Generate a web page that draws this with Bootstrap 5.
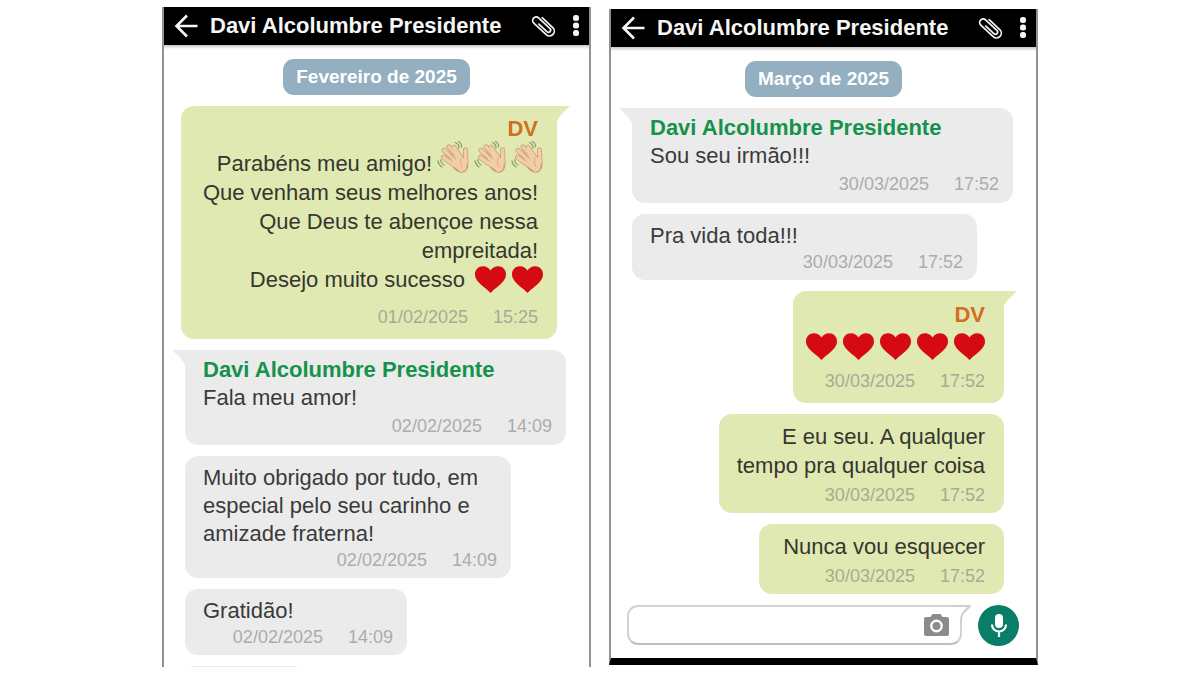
<!DOCTYPE html>
<html lang="pt-BR">
<head>
<meta charset="utf-8">
<meta name="viewport" content="width=device-width, initial-scale=1">
<title>Davi Alcolumbre Presidente</title>
<link href="https://cdn.jsdelivr.net/npm/bootstrap@5.3.0/dist/css/bootstrap.min.css" rel="stylesheet">
<style>
  body { font-family: "Liberation Sans", Arial, sans-serif; font-size: 22px; line-height: 29px; color: #35362f; background: #fff; }
  .board { max-width: 876px; height: 100vh; padding: 7px 0 8px; gap: 18px; }
  .phone { flex: 1 1 0; min-width: 0; min-height: 0; border: solid #929292; border-width: 0 2px; overflow: hidden; }
  .phone-closed { margin: 2px 0; border-bottom: 7px solid #000; }
  .topbar { height: 38px; margin: 0 -2px; padding: 0 8px 0 12px; background: #000; color: #f6f6f6; box-shadow: 0 2px 3px #c4c4c4; flex: none; }
  .topbar h1 { font-size: 22px; font-weight: 700; line-height: 38px; }
  .icon-btn { border: 0; padding: 0; background: none; color: inherit; display: flex; }
  .chat { padding: 14px 32px 0 16px; gap: 11px; min-height: 0; }
  .chat > * { flex: none; }
  .pill { margin-left: 16px; padding: 0 13px; border-radius: 11px; background: #93afc0; color: #fff; font-size: 19px; font-weight: 700; line-height: 36px; }
  .bubble { position: relative; border-radius: 13px; }
  .bubble p, .bubble h2 { margin: 0; }
  .received { align-self: flex-start; margin-left: 5px; background: #ebebeb; padding: 8px 14px 8px 18px; line-height: 28px; color: #3a3a3a; }
  .sent { align-self: flex-end; background: #e0e9b1; padding: 8px 19px 8px 18px; text-align: right; }
  .tail::before { content: ""; position: absolute; top: 0; width: 14px; height: 16px; }
  .received.tail { border-top-left-radius: 0; padding-top: 6px; padding-bottom: 9px; }
  .received.tail::before { right: 100%; margin-right: -1px; background: #ebebeb; clip-path: polygon(0 0, 100% 0, 100% 100%, 60% 50%); }
  .sent.tail { border-top-right-radius: 0; padding: 9px 19px 12px 13px; }
  .sent.tail::before { left: 100%; margin-left: -1px; background: #e0e9b1; clip-path: polygon(0 0, 100% 0, 35% 55%, 0 100%); }
  .author { font-size: 22px; font-weight: 700; line-height: inherit; color: #15924b; }
  .sent .author { color: #d0701f; }
  .meta { display: flex; justify-content: flex-end; gap: 25px; margin-top: 2px; font-size: 18px; line-height: 20px; color: #acacac; }
  .received.tail .meta { margin-top: 4px; }
  .sent .meta { margin-top: 5px; color: #a7ab95; }
  .sent.tail .meta { margin-top: 7px; }
  .sent.long { padding-top: 8px; padding-left: 22px; }
  .sent.long .meta { margin-top: 13px; }
  .sent.brief { padding-left: 24px; }
  .emoji-line { height: 35px; display: flex; align-items: flex-end; justify-content: flex-end; }
  .overhang { display: flex; margin: 0 -8px 3px 5px; gap: 2px; }
  .hand { width: 35px; height: 35px; }
  .heart { width: 31px; height: 27px; fill: #d50a12; }
  .hearts { display: flex; gap: 6px; align-items: center; }
  .hearts-end { margin: 0 -5px 0 10px; }
  .w-name { width: 381px; } .w-thanks { width: 326px; } .w-short { width: 222px; } .w-mid { width: 345px; } .w-stub { width: 118px; }
  .composer { padding: 11px 17px 0 16px; gap: 16px; }
  .field { position: relative; height: 40px; }
  .field input { width: 100%; height: 40px; padding: 4px 48px 4px 12px; border: 2px solid #d2d2d2; border-bottom-color: #bfbfbf; border-radius: 11px; border-top-right-radius: 0; font-size: 20px; background: #fff; outline: 0; }
  .field .notch { position: absolute; top: 0; right: -9px; }
  .field .icon-btn { position: absolute; right: 13px; top: 9px; color: #8b8b8b; }
  .mic { width: 41px; height: 41px; border: 0; padding: 0; border-radius: 50%; background: #087d67; flex: none; }
</style>
</head>
<body>
<svg class="d-none" aria-hidden="true">
  <symbol id="back" viewBox="0 0 24 24"><path d="M13 1.500 2.500 12 13 22.500M2.500 12H23.500" fill="none" stroke="currentColor" stroke-width="2.600"/></symbol>
  <symbol id="clip" viewBox="0 0 26 26"><path transform="translate(13 13) rotate(-47)" d="M4.800-7V7.500A4.800 4.800 0 0 1-4.800 7.500V-9.500A3.500 3.500 0 0 1 2.200-9.500V6A2.200 2.200 0 0 1-2.200 6V-5" fill="none" stroke="currentColor" stroke-width="1.700" stroke-linecap="round"/></symbol>
  <symbol id="dots" viewBox="0 0 6 22"><g fill="currentColor"><rect width="6" height="6" rx="2.500"/><rect y="7.500" width="6" height="6" rx="2.500"/><rect y="15" width="6" height="6" rx="2.500"/></g></symbol>
  <symbol id="heart" viewBox="0 0 31 27"><path d="M15.500 27C12 23 6 19.500 2.500 15 .5 12.300 0 10.500 0 8.300 0 3.800 3.500.3 8 .3c3.200 0 6 1.700 7.500 4.300C17 2 19.800.3 23 .3c4.500 0 8 3.500 8 8 0 2.200-.5 4-2.500 6.700C25 19.500 19 23 15.500 27Z"/></symbol>
  <symbol id="hand" viewBox="0 0 35 35">
    <g fill="none" stroke-linecap="round" stroke-linejoin="round">
      <g stroke="#c99a74" stroke-width="5"><path d="M17 25 6.500 17.500M19 22 7 10.500M22 20 12 7M25 19 17 7.500M29 23 28.500 10"/></g>
      <path d="M16 22Q20 16 29 19Q32 28 27 31Q21 33 16 25Z" fill="#f1cda8" stroke="#c99a74" stroke-width="2.500"/>
      <g stroke="#f1cda8" stroke-width="3.600"><path d="M17 25 6.500 17.500M19 22 7 10.500M22 20 12 7M25 19 17 7.500M29 23 28.500 10"/></g>
      <path d="M17 23 23 17 29 21 28 29 24 31 18 26Z" fill="#f1cda8" stroke="#f1cda8" stroke-width="2"/>
      <path d="M24 18Q22 23 25 27M14 19 9 14.500M17.500 15.500 13 10" stroke="#d7a981" stroke-width=".9"/>
      <path d="M18.500 2.500Q22 4 22 8M21.500 1.500Q25 3.500 24.500 7M1 21Q1.500 25 5 27M3.500 20Q4 23 7 25" stroke="#8e9a7c" stroke-width="1.300"/>
    </g>
  </symbol>
</svg>

<main class="board d-flex mx-auto">
  <section class="phone d-flex flex-column" aria-label="Fevereiro de 2025">
    <header class="topbar d-flex align-items-center">
      <button class="icon-btn" type="button" aria-label="Voltar"><svg width="24" height="24"><use href="#back"/></svg></button>
      <h1 class="m-0 ms-2 ps-1 me-auto text-nowrap">Davi Alcolumbre Presidente</h1>
      <button class="icon-btn me-3" type="button" aria-label="Anexar"><svg width="26" height="26"><use href="#clip"/></svg></button>
      <button class="icon-btn me-1" type="button" aria-label="Mais"><svg width="6" height="22"><use href="#dots"/></svg></button>
    </header>
    <div class="chat d-flex flex-column">
      <div class="d-flex justify-content-center"><span class="pill">Fevereiro de 2025</span></div>
      <article class="bubble sent tail long">
        <h2 class="author">DV</h2>
        <p class="emoji-line">Parabéns meu amigo!<span class="overhang"><svg class="hand"><use href="#hand"/></svg><svg class="hand"><use href="#hand"/></svg><svg class="hand"><use href="#hand"/></svg></span></p>
        <p>Que venham seus melhores anos!<br>Que Deus te abençoe nessa<br>empreitada!</p>
        <p class="d-flex justify-content-end">Desejo muito sucesso<span class="hearts hearts-end"><svg class="heart"><use href="#heart"/></svg><svg class="heart"><use href="#heart"/></svg></span></p>
        <div class="meta"><span>01/02/2025</span><span>15:25</span></div>
      </article>
      <article class="bubble received tail w-name">
        <h2 class="author">Davi Alcolumbre Presidente</h2>
        <p>Fala meu amor!</p>
        <div class="meta"><span>02/02/2025</span><span>14:09</span></div>
      </article>
      <article class="bubble received w-thanks">
        <p>Muito obrigado por tudo, em especial pelo seu carinho e amizade fraterna!</p>
        <div class="meta"><span>02/02/2025</span><span>14:09</span></div>
      </article>
      <article class="bubble received w-short">
        <p>Gratidão!</p>
        <div class="meta"><span>02/02/2025</span><span>14:09</span></div>
      </article>
      <div class="bubble received w-stub"></div>
    </div>
  </section>

  <section class="phone phone-closed d-flex flex-column" aria-label="Março de 2025">
    <header class="topbar d-flex align-items-center">
      <button class="icon-btn" type="button" aria-label="Voltar"><svg width="24" height="24"><use href="#back"/></svg></button>
      <h1 class="m-0 ms-2 ps-1 me-auto text-nowrap">Davi Alcolumbre Presidente</h1>
      <button class="icon-btn me-3" type="button" aria-label="Anexar"><svg width="26" height="26"><use href="#clip"/></svg></button>
      <button class="icon-btn me-1" type="button" aria-label="Mais"><svg width="6" height="22"><use href="#dots"/></svg></button>
    </header>
    <div class="chat d-flex flex-column">
      <div class="d-flex justify-content-center"><span class="pill">Março de 2025</span></div>
      <article class="bubble received tail w-name">
        <h2 class="author">Davi Alcolumbre Presidente</h2>
        <p>Sou seu irmão!!!</p>
        <div class="meta"><span>30/03/2025</span><span>17:52</span></div>
      </article>
      <article class="bubble received w-mid">
        <p>Pra vida toda!!!</p>
        <div class="meta"><span>30/03/2025</span><span>17:52</span></div>
      </article>
      <article class="bubble sent tail">
        <h2 class="author">DV</h2>
        <div class="hearts emoji-line"><svg class="heart"><use href="#heart"/></svg><svg class="heart"><use href="#heart"/></svg><svg class="heart"><use href="#heart"/></svg><svg class="heart"><use href="#heart"/></svg><svg class="heart"><use href="#heart"/></svg></div>
        <div class="meta"><span>30/03/2025</span><span>17:52</span></div>
      </article>
      <article class="bubble sent">
        <p>E eu seu. A qualquer<br>tempo pra qualquer coisa</p>
        <div class="meta"><span>30/03/2025</span><span>17:52</span></div>
      </article>
      <article class="bubble sent brief">
        <p>Nunca vou esquecer</p>
        <div class="meta"><span>30/03/2025</span><span>17:52</span></div>
      </article>
    </div>
    <form class="composer d-flex">
      <div class="field flex-grow-1">
        <input type="text" aria-label="Mensagem">
        <svg class="notch" width="16" height="16"><path d="M0 2H12L7 7V16H0Z" fill="#fff"/><path d="M0 1H15L9.500 6.500Q6 9.500 6 16" fill="#fff" stroke="#cfcfcf" stroke-width="2"/></svg>
        <button class="icon-btn" type="button" aria-label="Câmera"><svg width="25" height="22" viewBox="0 0 25 22"><path fill="currentColor" d="M2 3H6.500L8.500 0H16.500L18.500 3H23Q25 3 25 5V20Q25 22 23 22H2Q0 22 0 20V5Q0 3 2 3Z"/><circle cx="12.500" cy="12" r="5.200" fill="#8b8b8b" stroke="#fff" stroke-width="2.400"/></svg></button>
      </div>
      <button class="mic d-flex align-items-center justify-content-center" type="button" aria-label="Gravar áudio"><svg width="18" height="26" viewBox="0 0 18 26"><rect x="5" y="1" width="8" height="14" rx="4" fill="#fff"/><path d="M2 11.500A7 7 0 0 0 16 11.500M9 18.500V24" fill="none" stroke="#fff" stroke-width="2.200"/></svg></button>
    </form>
  </section>
</main>
<script src="https://cdn.jsdelivr.net/npm/bootstrap@5.3.0/dist/js/bootstrap.bundle.min.js"></script>
</body>
</html>
